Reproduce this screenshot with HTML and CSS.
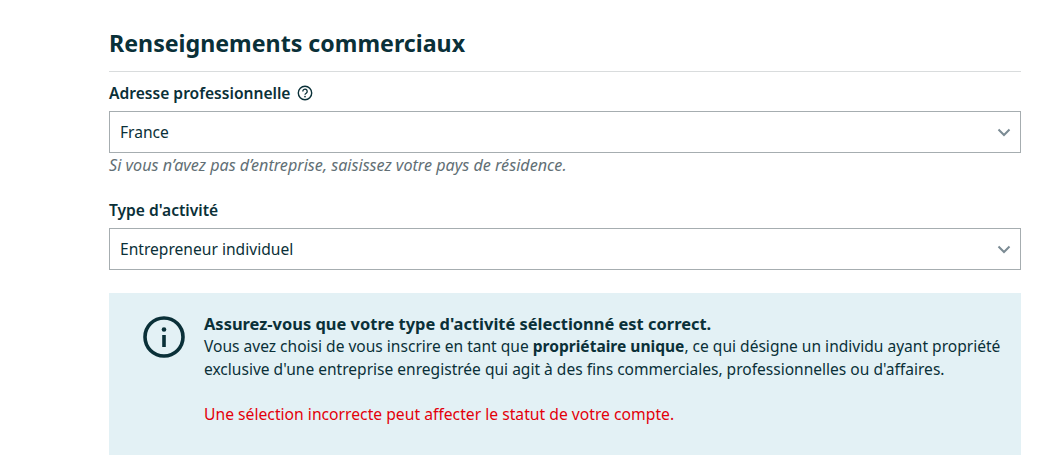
FILE: index.html
```html
<!DOCTYPE html>
<html lang="fr">
<head>
    <meta charset="UTF-8">
    <title>Renseignements commerciaux</title>
    <link rel="stylesheet" href="styles.css">
</head>
<body>
    <div class="maindiv">
        <h1>Renseignements commerciaux</h1>

        <div class="field">
            <div class="field-label">
                Adresse professionnelle
                <svg class="help" width="16" height="16" viewBox="0 0 16 16">
                    <circle cx="8" cy="8" r="6.7" fill="none" stroke="#0a3038" stroke-width="1.4"/>
                    <path d="M5.8 6.4a2.2 2.2 0 1 1 3.4 1.8c-.8.5-1.2.9-1.2 1.6" fill="none" stroke="#0a3038" stroke-width="1.3"/>
                    <circle cx="8" cy="11.6" r=".85" fill="#0a3038"/>
                </svg>
            </div>
            <div class="select">
                <span>France</span>
                <svg class="chevron" width="14" height="9" viewBox="0 0 14 9">
                    <path d="M1.5 1.5 7 7l5.5-5.5" fill="none" stroke="#7b8b94" stroke-width="2"/>
                </svg>
            </div>
            <p class="hint">Si vous n’avez pas d’entreprise, saisissez votre pays de résidence.</p>
        </div>

        <div class="field">
            <div class="field-label">Type d'activité</div>
            <div class="select">
                <span>Entrepreneur individuel</span>
                <svg class="chevron" width="14" height="9" viewBox="0 0 14 9">
                    <path d="M1.5 1.5 7 7l5.5-5.5" fill="none" stroke="#7b8b94" stroke-width="2"/>
                </svg>
            </div>
        </div>

        <div class="notice">
            <svg class="notice-icon" width="42" height="42" viewBox="0 0 42 42">
                <circle cx="21" cy="21" r="19" fill="none" stroke="#0a3038" stroke-width="3.6"/>
                <rect x="19.2" y="19" width="3.6" height="12" fill="#0a3038"/>
                <circle cx="21" cy="13.5" r="2.3" fill="#0a3038"/>
            </svg>
            <div class="notice-text">
                <strong class="notice-title">Assurez-vous que votre type d'activité sélectionné est correct.</strong>
                <p>Vous avez choisi de vous inscrire en tant que <b>propriétaire unique</b>, ce qui désigne un individu ayant propriété exclusive d'une entreprise enregistrée qui agit à des fins commerciales, professionnelles ou d'affaires.</p>
                <p class="warning">Une sélection incorrecte peut affecter le statut de votre compte.</p>
            </div>
        </div>
    </div>
</body>
</html>
```

FILE: styles.css
```css
html,body{
    margin: 0;
    padding: 0;
    background-color: #fff;
}
body{
    font-family: "Noto Sans", "Open Sans", sans-serif;
    font-size: 15.6px;
    color: #0a3038;
    overflow: hidden;
}
.maindiv{
    width: 912px;
    margin-left: 109px;
    padding-top: 26px;
}
h1{
    margin: 0;
    height: 45px;
    line-height: 34px;
    font-size: 23.2px;
    font-weight: 700;
    border-bottom: 1px solid #d9dcdd;
}
.field{
    margin-top: 11px;
}
.field + .field{
    margin-top: 25px;
}
.field-label{
    display: flex;
    align-items: center;
    gap: 6px;
    height: 20px;
    margin-bottom: 8px;
    font-weight: 600;
}
.select{
    display: flex;
    align-items: center;
    justify-content: space-between;
    box-sizing: border-box;
    height: 42px;
    padding: 0 9px 0 10px;
    border: 1px solid #a6adb0;
}
.hint{
    margin: 2px 0 0;
    line-height: 20px;
    font-size: 16.15px;
    font-style: italic;
    color: #626f75;
}
.notice{
    display: flex;
    gap: 19px;
    box-sizing: border-box;
    height: 162px;
    margin-top: 23px;
    padding: 20px 12px 0 34px;
    background-color: #e3f1f5;
}
.notice-icon{
    flex-shrink: 0;
    margin-top: 3px;
}
.notice-title{
    display: block;
    margin-bottom: 1px;
    line-height: 21px;
    font-size: 16.45px;
}
.notice-text p{
    margin: 0;
    line-height: 23px;
    font-size: 15.55px;
}
.notice-text b{
    font-weight: 700;
}
.notice-text .warning{
    margin-top: 22px;
    font-size: 15.7px;
    color: #e3000b;
}
```
